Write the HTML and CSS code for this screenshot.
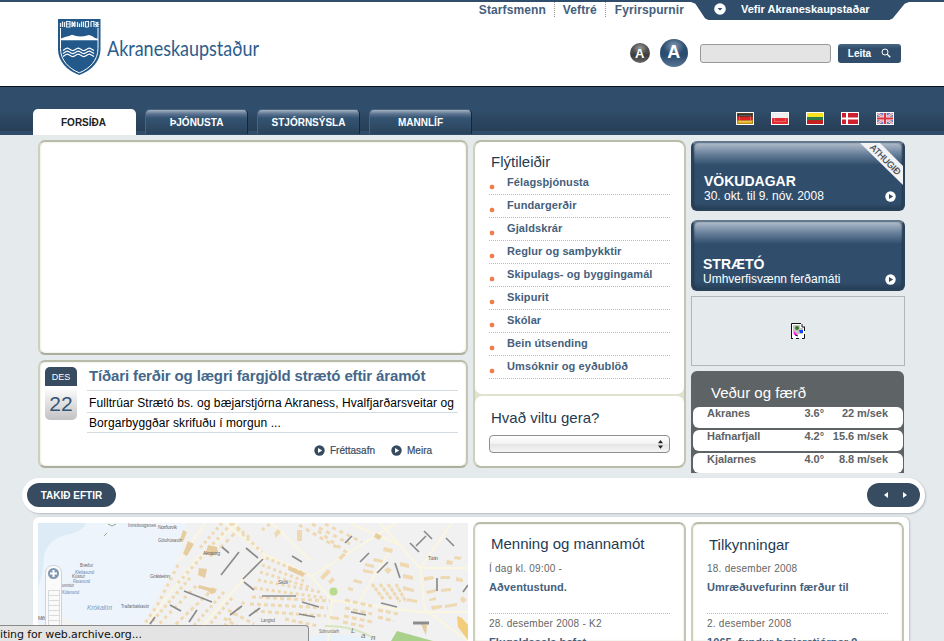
FILE: index.html
```html
<!DOCTYPE html>
<html lang="is">
<head>
<meta charset="utf-8">
<title>Akraneskaupstaður</title>
<link rel="stylesheet" href="styles.css">
</head>
<body>
<svg class="defs" width="0" height="0">
  <defs>
    <symbol id="go" viewBox="0 0 11 11"><circle cx="5.5" cy="5.5" r="5.2" fill="currentColor"/><path d="M4 2.9v5.2l4.2-2.6z" class="hole"/></symbol>
  </defs>
</svg>
<header class="top">
  <svg class="logo" viewBox="57 18 205 60" width="205" height="60">
    <path d="M58 19H100.500V49C100.500 61 92 70.500 79.300 75C66.500 70.500 58 61 58 49Z" fill="#23588a"/>
    <path d="M60.500 28V48.500C60.500 60 68.500 68.500 79.300 72.800C90 68.500 98 60 98 48.500V28" fill="none" stroke="#fff" stroke-width="1"/>
    <path d="M61 40.200V38.500L65 37L69 36L72 34.800L76 36L80 36.500L84 36.300L89 35L92 36L95 38L98 38.800V40.200Z" fill="#fff"/>
    <path d="M60.500 23v4M62.500 21.500v5.500M64.500 22v5M66.500 21.500h3.500v5.500h-3.500zM66.500 24h3.500M72 21.500l3 5.500M72 27l3-5.500M72 21.500v5.500M75 21.500v5.500M77.500 22v5M79.500 23.500v3.500M81.500 21.500v5.500M83.500 21.500v5.500M85.500 21.500h3v5.500M85.500 21.500v5.500h3M91 21.500h3v5.500M91 21.500v5.500M95.500 22l3 2.500-3 2.500M98.500 22l-3 2.500 3 2.500" fill="none" stroke="#e8f0f7" stroke-width="1.200"/>
    <g fill="none" stroke="#fff" stroke-width="1.200">
      <path id="w" d="M63 50.500L66 48.500q1.500-.7 3 .3l2.500 1.500q1.500.6 3-.3l2.500-1.500q1.500-.7 3 .3l2.500 1.500q1.500.6 3-.3l2.500-1.500q1.500-.7 3 .3l3 1.700"/>
      <use href="#w" y="3"/><use href="#w" y="6"/>
    </g>
    <text class="logo-text" x="107" y="56" textLength="152" lengthAdjust="spacingAndGlyphs">Akraneskaupstaður</text>
  </svg>
  <div class="tools">
    <div class="toplinks">
      <a>Starfsmenn</a><a>Veftré</a><a>Fyrirspurnir</a>
      <div class="sites">
        <svg viewBox="0 0 12 12" width="12" height="12"><circle cx="6" cy="6" r="5.800" fill="#fff"/><path d="M3.600 5h4.800L6 7.600z" fill="#304e6c"/></svg>
        <span>Vefir Akraneskaupstaðar</span>
      </div>
    </div>
    <div class="search">
      <span class="ball small">A</span><span class="ball big">A</span>
      <span class="field"></span>
      <span class="btn"><span>Leita</span><svg viewBox="0 0 10 10" width="10" height="10"><circle cx="4" cy="4" r="3" fill="none" stroke="#fff"/><path d="M6.300 6.300L9.300 9.300" stroke="#fff" stroke-width="1.300"/></svg></span>
    </div>
  </div>
</header>
<nav class="nav">
  <a class="tab on">FORSÍÐA</a><a class="tab">ÞJÓNUSTA</a><a class="tab">STJÓRNSÝSLA</a><a class="tab">MANNLÍF</a>
  <div class="flags">
    <svg viewBox="0 0 16 11"><path fill="#333" d="M0 0h16v4H0z"/><path fill="#d22" d="M0 3.600h16v4H0z"/><path fill="#e6b422" d="M0 7.400h16V11H0z"/><path d="M.5.500h15v10H.5z" fill="none" stroke="#855c1f" stroke-opacity=".5"/><path d="M2.500 2.500h11v6h-11z" fill="none" stroke="#fff" stroke-opacity=".2"/></svg>
    <svg viewBox="0 0 16 11"><path fill="#eee" d="M0 0h16v6H0z"/><path fill="#e22d33" d="M0 5h16v6H0z"/><path d="M2.500 2.500h11v6h-11z" fill="none" stroke="#fff" stroke-opacity=".25"/></svg>
    <svg viewBox="0 0 16 11"><path fill="#fde21f" d="M0 0h16v4H0z"/><path fill="#2b7d48" d="M0 4h16v3H0z"/><path fill="#c02222" d="M0 7h16v4H0z"/></svg>
    <svg viewBox="0 0 16 11"><path fill="#cf1f2e" d="M0 0h16v11H0z"/><path d="M5 0v11M0 5.500h16" stroke="#fff" stroke-width="2"/></svg>
    <svg viewBox="0 0 16 11"><path fill="#6175b8" d="M0 0h16v11H0z"/><path d="M0 0l16 11M16 0L0 11" stroke="#f2e6ee" stroke-width="2.400"/><path d="M0 0l16 11M16 0L0 11" stroke="#dc5560" stroke-width=".8"/><path d="M8 0v11M0 5.500h16" stroke="#f6dfe3" stroke-width="3.600"/><path d="M8 0v11M0 5.500h16" stroke="#dc3440" stroke-width="2"/></svg>
  </div>
</nav>
<main class="cols">
  <div class="left">
    <section class="panel hero"></section>
    <section class="panel news">
      <div class="date"><span class="mon">DES</span><span class="day">22</span></div>
      <div class="story">
        <h2>Tíðari ferðir og lægri fargjöld strætó eftir áramót</h2>
        <p class="l1">Fulltrúar Strætó bs. og bæjarstjórna Akraness, Hvalfjarðarsveitar og</p>
        <p class="l2">Borgarbyggðar skrifuðu í morgun ...</p>
        <div class="more">
          <a><svg width="11" height="11"><use href="#go"/></svg>Fréttasafn</a>
          <a><svg width="11" height="11"><use href="#go"/></svg>Meira</a>
        </div>
      </div>
    </section>
  </div>
  <section class="quick">
    <div class="box links">
      <h3>Flýtileiðir</h3>
      <ul>
        <li>Félagsþjónusta</li><li>Fundargerðir</li><li>Gjaldskrár</li><li>Reglur og samþykktir</li><li>Skipulags- og byggingamál</li><li>Skipurit</li><li>Skólar</li><li>Bein útsending</li><li>Umsóknir og eyðublöð</li>
      </ul>
    </div>
    <div class="box want">
      <h3>Hvað viltu gera?</h3>
      <div class="select"><svg viewBox="0 0 5 9" width="5" height="9"><path d="M0 3.300L2.500 0L5 3.300zM0 5.500h5L2.500 8.800z" fill="#222"/></svg></div>
    </div>
  </section>
  <div class="right">
    <a class="banner b1"><svg class="ribbon" viewBox="0 0 48 48" width="48" height="48"><path d="M1 0H21L48 27V46z" fill="#f3f3f6"/><text x="0" y="0" transform="translate(12.500 7) rotate(45)" textLength="39">ATHUGIÐ</text></svg>
      <b>VÖKUDAGAR</b><span>30. okt. til 9. nóv. 2008</span><svg class="go" width="11" height="11"><use href="#go"/></svg></a>
    <a class="banner b2"><b>STRÆTÓ</b><span>Umhverfisvænn ferðamáti</span><svg class="go" width="11" height="11"><use href="#go"/></svg></a>
    <div class="missing">
      <svg viewBox="0 0 14 16" width="14" height="16"><path d="M0 0h10l4 4v12h-4v-1H0z" fill="#fff"/><path d="M.5 15.500V.5H10M11 1v3h3M13.500 4v4M13.500 11v4.500H11M0 15.500h2M5 15.500h3" fill="none" stroke="#111"/><path d="M2 2h7v3h3v6H2z" fill="#c4c4c4"/><circle cx="6" cy="5" r="2" fill="#357a20"/><path d="M3 8l4 4H3z" fill="#f3d"/><path d="M8 7h4v3H9z" fill="#14f"/><path d="M4 12l3 1" stroke="#222"/></svg>
    </div>
    <section class="weather">
      <h3>Veður og færð</h3>
      <div class="row"><span>Akranes</span><span>3.6°</span><span>22 m/sek</span></div>
      <div class="row"><span>Hafnarfjall</span><span>4.2°</span><span>15.6 m/sek</span></div>
      <div class="row last"><span>Kjalarnes</span><span>4.0°</span><span>8.8 m/sek</span></div>
    </section>
  </div>
</main>
<div class="ticker">
  <span class="pill">TAKIÐ EFTIR</span>
  <span class="pill arrows"><svg viewBox="0 0 24 8" width="24" height="8"><path d="M5 1v6L1 4zM20 1v6l4-3z" fill="#fff"/></svg></span>
</div>
<div class="lower">
  <svg class="map" viewBox="38 523 430 118" width="430" height="118">
    <rect x="38" y="523" width="430" height="118" fill="#f1f1f1"/>
    <path d="M38 523H187L182 540L179 560L168 578L160 592L150 612L138 628L125 641H38z" fill="#eef4fb"/>
    <path d="M38 523H86Q83 531 70 534Q48 538 44 556Q43 574 38 587z" fill="#dcebf6"/>
    <path d="M60 614Q75 626 110 630L100 641H60z" fill="#f3f3f3"/>
    <path d="M309 636Q350 632 378 641H309z" fill="#e8f2fa"/>
    <g fill="none" stroke="#fbf6df" stroke-width="2">
      <path d="M238 523L196 560L146 625M205 523L178 562M225 523L265 555L310 575M265 555L225 600L190 641M396 523L312 576M310 575L332 600L328 641M380 523L420 568L425 610L468 641M420 568L452 523M420 568H468M330 600L420 612H468M272 523L310 560M390 550L360 600M350 523L400 545"/>
    </g>
    <g fill="none" stroke="#eed9b2" stroke-width="3">
      <path d="M232 523L178 583" stroke-dasharray="3 3.500"/><path d="M222 523L200 548" stroke-dasharray="3 3"/>
      <path d="M240 528L212 556" stroke-dasharray="4 4"/><path d="M178 565L158 604L142 628" stroke-dasharray="3 4"/>
      <path d="M190 578L150 624" stroke-dasharray="3 3"/><path d="M196 586L158 625" stroke-dasharray="3 4"/>
      <path d="M214 588L174 626" stroke-dasharray="4 3"/><path d="M224 592L188 632" stroke-dasharray="3 3"/>
      <path d="M232 598L200 636" stroke-dasharray="3 3"/><path d="M244 602L216 636" stroke-dasharray="3 4"/>
      <path d="M242 534L262 552M232 523L250 538M262 530L270 524" stroke-dasharray="3 3.500"/>
      <path d="M266 558L306 574M262 565L304 581M260 572L312 588M258 580L320 592M254 588L326 598" stroke-dasharray="3 3"/>
      <path d="M252 597L330 601M250 604L328 608M254 611L326 616M285 619L318 626M228 610L254 624M224 618L246 632" stroke-dasharray="4 3"/>
      <path d="M299 525L338 548M312 524L350 544M325 524L362 542M318 531L350 555" stroke-dasharray="4 4"/>
      <path d="M345 600L372 606M345 608L372 614M344 616L372 622M343 622L366 627M378 610L398 614M378 617L394 621" stroke-dasharray="5 3"/>
      <path d="M372 584L384 600M380 584L392 600M388 584L400 602M396 584L406 602" stroke-dasharray="4 1"/>
    </g>
    <g fill="#eed9b2">
      <path d="M297 530h5v11h-5zM320 577l8-8 3 3-8 8zM328 582l4-5 3 3-4 4zM338 558l5-5 3 2-5 5zM384 547l9 2-1 4-9-2zM374 558l9 2-1 3-9-2zM365 563l9 2v3l-9-2zM363 569l10 2v3l-10-2zM400 562l9 2v4l-9-2zM403 574l10 2v4l-10-2zM403 586l11 3v3l-11-2zM407 598l10 2v3l-10-2zM384 570l4-3 4 3-4 4zM354 579l8 2v3l-9-2zM348 587l5 1v3l-5-1zM424 577l9-1 1 3-10 2zM441 576h9v3h-10zM426 591l10-2v3l-9 2zM441 589l10-1v3l-10 1zM429 599l7-2v3l-6 1zM445 605l12-2v3l-12 2zM431 606l11-1v3l-10 2zM447 560l6 1-1 4-6-1zM455 556l7 1-2 3-6-1zM456 577l7 2v3l-7-1zM462 596l5 4-4 3-3-3zM330 616l9 1v3l-9-1zM274 533l4-4 3 3-5 6z"/>
    </g>
    <g fill="#e6cda0">
      <path d="M208 545l9 2 1 5-7 5-5-5zM199 568l8 1-2 9-7-3zM199 585l12 3 6 1-2 4-4 1-3-3-10-3zM289 566l16 7-2 4-15-7zM183 530l4 2-4 10-3-2zM188 541l6 3-7 12-4-2zM376 533l6 3-3 4-5-3zM421 624l6 1-1 10-3-6z"/>
    </g>
    <path d="M457 616l5 2 6 7v15l-4-5-6-8z" fill="#f3cd7c"/>
    <path d="M397 631L433 641H391z" fill="#a9d18b"/>
    <path d="M325 626Q355 626 375 639" fill="none" stroke="#d5e6bd" stroke-width="2"/>
    <circle cx="333.500" cy="591.500" r="4" fill="#b8db8c"/>
    <g stroke="#8c8c8c" stroke-width="1.700">
      <path d="M221 575L239 552M222 547L229 553M184 591L212 602M243 579L263 559M246 548L258 558M292 556L302 562M360 562L369 553M377 573L388 562M395 563L400 578M410 543L419 552M424 531L432 539M446 538L454 546M416 546L426 536M437 578V591M463 592L468 585M345 543L352 536M244 582L254 590M230 615L242 606M249 616L260 608M189 622L197 610M170 605L181 611M150 624L155 617M262 596H296M302 602L319 607M299 614L315 617M351 612L366 615M381 603L397 607"/>
      <path d="M413 623h16" stroke-width="3"/>
    </g>
    <g class="maplabel">
      <text x="128" y="527" textLength="28" lengthAdjust="spacingAndGlyphs">Innstivogsnes</text><text x="158" y="528.500" textLength="19">Norðurvík</text><text x="158" y="542" textLength="24" lengthAdjust="spacingAndGlyphs">Götuhúsavör</text><text x="150" y="578" textLength="20">Grásteinn</text><text x="80" y="567" textLength="13" lengthAdjust="spacingAndGlyphs">Bræður</text><text x="72" y="578" textLength="13" lengthAdjust="spacingAndGlyphs">Kústur</text><text x="62" y="586.500" textLength="12" lengthAdjust="spacingAndGlyphs">unnstur</text><text x="121" y="608" textLength="28" lengthAdjust="spacingAndGlyphs">Traðarbakkavör</text><text x="38" y="620" textLength="7">Mið</text><text x="261" y="622" textLength="14" lengthAdjust="spacingAndGlyphs">Langisd</text><text x="319" y="633" textLength="20" lengthAdjust="spacingAndGlyphs">Sólmundarh</text><text x="428" y="560" textLength="10">Túnin</text><text x="203" y="555" textLength="17">Akratorg</text><text x="278" y="584" textLength="10">Skóli</text>
      <g class="blue"><text x="75" y="573.500" textLength="19" lengthAdjust="spacingAndGlyphs">Klettasund</text><text x="73" y="582.500" textLength="17" lengthAdjust="spacingAndGlyphs">Flasarsund</text><text x="62" y="594" textLength="17" lengthAdjust="spacingAndGlyphs">Kútarsund</text><text class="bay" x="87" y="610" textLength="25">Krókalón</text></g>
      <text class="bay2" x="351" y="633">L</text><text class="bay2" x="361" y="638">a</text><text class="bay2" x="371" y="640">n</text>
    </g>
    <path d="M108 524l4 2 4-2M107 533l-3 3" stroke="#9aa78a" fill="none"/>
    <rect x="45.500" y="565.500" width="16" height="90" rx="7" fill="#fafafa" stroke="#cfd3d6"/>
    <circle cx="53.500" cy="573.500" r="5.500" fill="#8298b0"/><path d="M53.500 570v7M50 573.500h7" stroke="#fff" stroke-width="2"/>
    <path d="M48.500 590v50M59.500 590v50M48.500 590.500h11M48.500 595.500h11M48.500 600.500h11M48.500 605.500h11M48.500 610.500h11M48.500 615.500h11M48.500 620.500h11" stroke="#d9dcdf" fill="none"/>
  </svg>
  <section class="panel feed f1">
    <h3>Menning og mannamót</h3>
    <article><time>Í dag kl. 09:00 -</time><b>Aðventustund.</b></article>
    <article><time>28. desember 2008 - K2</time><b>Flugeldasala hefst</b></article>
  </section>
  <section class="panel feed f2">
    <h3>Tilkynningar</h3>
    <article><time>18. desember 2008</time><b>Umræðuvefurinn færður til</b></article>
    <article><time>2. desember 2008</time><b>1065. fundur bæjarstjórnar 9</b></article>
  </section>
</div>
<div class="status">iting for web.archive.org...</div>
</body>
</html>
```
FILE: styles.css
```css
* { box-sizing: border-box; }
html { height: 641px; overflow: hidden; }
body { margin: 0; width: 944px; height: 641px; overflow: hidden; background: #e5eaed; font-family: "Liberation Sans", Arial, sans-serif; color: #44607c; }
h2, h3, p, ul { margin: 0; padding: 0; font-weight: normal; }
.defs { position: absolute; }
.hole { fill: var(--hole, #fff); }

.top { height: 86px; background: #fff; border-top: 2px solid #304e6c; display: flex; justify-content: space-between; padding: 16px 35px 0 57px; }
.logo-text { font: 22px Lato, "Open Sans", sans-serif; fill: #2b5d8c; }
.tools { margin-top: -16px; display: flex; flex-direction: column; }
.toplinks { display: flex; font-weight: bold; font-size: 12px; line-height: 17px; color: #44607c; letter-spacing: .1px; height: 20px; }
.toplinks a { height: 15px; padding: 0 8px; border-left: 1px dotted #999; }
.toplinks a:nth-child(3) { padding-left: 9px; padding-right: 7px; }
.toplinks a:first-child { border: 0; }
.sites { width: 218px; height: 18px; background: #304e6c; clip-path: polygon(0 0, 100% 0, 98% 10%, 92.500% 92%, 91% 100%, 8% 100%, 6.500% 92%, 2% 10%); display: flex; align-items: flex-start; gap: 15px; padding: 1px 0 0 23px; color: #fff; font-size: 11px; letter-spacing: 0; line-height: 13px; }
.search { display: flex; align-items: center; height: 28px; margin: 17px 0 0 159px; }
.ball { border-radius: 50%; color: #fff; font-weight: bold; display: flex; align-items: center; justify-content: center; }
.small { width: 20px; height: 20px; font-size: 13px; background: radial-gradient(ellipse 8px 6px at 50% 25%, #999, transparent), linear-gradient(#4c4c4c 50%, #3a3838 60%, #6a6868); }
.big { width: 28px; height: 28px; font-size: 18px; margin-left: 10px; padding-bottom: 1px; background: radial-gradient(ellipse 11px 9px at 50% 25%, #8297b0, transparent), linear-gradient(#2c4d70 60%, #5b7694); }
.field { width: 131px; height: 19px; margin-left: 12px; border: 1px solid #999; border-radius: 3px; background: #e4e4e4; }
.btn { width: 63px; height: 19px; margin-left: 7px; padding: 0 10px; border-radius: 3px; background: linear-gradient(#4a6683, #304e6c 25%); color: #fff; font: bold 10px/19px "Liberation Sans", sans-serif; display: flex; justify-content: space-between; align-items: center; }

.nav { height: 49px; border-top: 1px solid #0a1118; background: linear-gradient(#304e6c 45%, #273e56 92%, #2f4d6b 92%); display: flex; align-items: flex-end; gap: 9px; padding-left: 33px; }
.tab { width: 103px; height: 25px; border-radius: 5px 5px 0 0; background: linear-gradient(#a5b2c2, #5a7390 4px, #345472 8px, #2a425b); border: solid #47637f; border-width: 1px 1px 0; border-right: 1px solid #142638; margin-bottom: 1px; color: #fff; font: bold 10px/25px "Liberation Sans", sans-serif; text-align: center; letter-spacing: 0; }
.tab.on { height: 26px; margin: 0; padding-right: 2px; background: #fff; border: 0; color: #222; line-height: 28px; }
.flags { display: flex; gap: 17px; margin: 0 0 10px 255px; }
.flags svg { width: 18px; height: 13px; border: 1px solid #fff; }

.cols { display: grid; grid-template-columns: 430px 213px 214px; gap: 5px; padding: 5px 0 0 38px; height: 343px; }
.panel { background: #fff; border: 2px solid; border-color: #b9bca8 #c3c6b3 #abae9d #cdd0bc; border-radius: 7px; box-shadow: inset 0 0 2px #d4d7c5; }
.hero { height: 215px; }
.news { height: 108px; margin-top: 5px; padding: 5px 7px 0 5px; display: flex; gap: 10px; }
.date { width: 32px; text-align: center; display: flex; flex-direction: column; gap: 3px; }
.mon { height: 19px; border-radius: 5px 5px 0 0; background: #374b61; color: #fff; font-size: 9px; line-height: 20px; }
.day { height: 31px; border-radius: 0 0 5px 5px; background: linear-gradient(#fbfbfb, #c2c2c4); color: #355577; font-size: 21px; line-height: 29px; }
.story { width: 371px; }
.story h2 { height: 24px; padding-left: 2px; border-bottom: 1px solid #d3dbe2; font-weight: bold; font-size: 15px; line-height: 18px; letter-spacing: -.14px; color: #44678a; white-space: nowrap; }
.story p { padding-left: 2px; border-bottom: 1px solid #d3dbe2; font-size: 12px; letter-spacing: .09px; color: #000; white-space: nowrap; }
.l1 { height: 22px; line-height: 24px; }
.l2 { height: 20px; line-height: 20px; }
.more { display: flex; gap: 16px; margin: 12px 0 0 227px; font-size: 10px; line-height: 12px; -webkit-text-stroke: .2px; color: #374b61; }
.more a { display: flex; gap: 5px; align-items: center; }
.more svg { color: #374b61; margin-top: -1px; }

.quick { height: 328px; background: #dfe2cf; border: 2px solid; border-color: #b9bca8 #c3c6b3 #b9bca8 #cdd0bc; border-radius: 8px; display: flex; flex-direction: column; gap: 2px; }
.box { background: #fff; border-radius: 7px; }
.links { height: 252px; padding: 10px 14px 0; }
h3 { font-size: 15px; line-height: 20px; color: #1f3b52; padding-left: 2px; }
ul { list-style: none; }
li { height: 23px; padding-left: 18px; border-bottom: 1px dotted #bbb; font: bold 11px/20px "Liberation Sans", sans-serif; background: radial-gradient(circle at 3px 15px, #f47c4c 2px, transparent 2.700px); color: #44607c; letter-spacing: .1px; }
.want { flex: 1; padding: 12px 14px 0; }
.select { width: 181px; height: 18px; margin-top: 7px; border: 1px solid #8e8e8e; border-radius: 4px; background: linear-gradient(#fff, #f2f2f2 50%, #e5e5e5 50%, #f5f5f5); display: flex; align-items: center; justify-content: flex-end; padding-right: 6px; }

.right { display: flex; flex-direction: column; }
.banner { position: relative; height: 70px; margin-top: 1px; padding: 31px 0 0 10px; border-radius: 6px; background: linear-gradient(#b0bccb, #627b96 12px, #304e6c 22px, #304e6c 60px, #283f58); border: 2px solid; border-color: #64788d #2b4158 #2b4158; box-shadow: inset 2px 0 2px -1px #23384e, inset -2px 0 2px -1px #23384e; color: #fff; display: flex; flex-direction: column; overflow: hidden; }
.banner b { font-size: 14px; line-height: 15px; }
.banner span { font-size: 12px; line-height: 15px; }
.b1 { padding-left: 11px; }
.b2 { height: 71px; margin-top: 9px; padding-top: 35px; }
.ribbon { position: absolute; right: -2px; top: -2px; }
.ribbon text { font: 9px "Liberation Sans", sans-serif; fill: #333f4c; stroke: #333f4c; stroke-width: .2px; }
.go { position: absolute; right: 7px; bottom: 7px; color: #fff; --hole: #304e6c; }
.b2 .go { bottom: 4px; }
.missing { height: 70px; margin-top: 5px; border: 1px solid #b3b5b6; display: flex; align-items: center; justify-content: center; }
.weather { height: 102px; margin-top: 5px; width: 213px; background: #5e6365; border-radius: 6px 6px 0 0; padding: 12px 1px 0 2px; overflow: hidden; }
.weather h3 { color: #fff; padding-left: 18px; height: 24px; }
.row { height: 21px; margin-bottom: 2px; border-radius: 6px; background: #fff; display: grid; grid-template-columns: 70px 47px 64px; font: bold 11px/13px "Liberation Sans", sans-serif; letter-spacing: -.05px; color: #5e6365; padding-left: 14px; white-space: nowrap; }
.row span + span { text-align: right; justify-self: end; }
.row.last { height: 20px; margin: 0; }

.ticker { height: 35px; width: 903px; margin-left: 22px; border-radius: 18px; background: #fff; box-shadow: 1px 1px 2px #b4bbc3; display: flex; justify-content: space-between; padding: 5px; }
.pill { width: 89px; height: 24px; border-radius: 12px; background: #374b61; color: #fff; font: bold 10px/25px "Liberation Sans", sans-serif; text-align: center; }
.arrows { width: 53px; display: flex; align-items: center; justify-content: center; padding-left: 2px; }
.lower { width: 876px; height: 124px; margin: 4px 0 0 33px; background: #fff; border-radius: 6px 6px 0 0; box-shadow: 1px 0 2px #b9c0c8; display: flex; gap: 5px; padding: 5px 0 0 5px; }
.map { margin-top: 1px; }
.maplabel text { font: 5px "Liberation Sans", sans-serif; fill: #666; }
.maplabel .blue text { fill: #5a83b8; font-style: italic; }
.maplabel .blue .bay { font-size: 6.500px; fill: #7e9cc4; }
.maplabel .bay2 { font: italic 8px "Liberation Sans", sans-serif; fill: #777; }
.feed { width: 213px; height: 119px; padding: 10px 14px 0; border-bottom: 0; border-radius: 7px 7px 0 0; overflow: hidden; }
.feed h3 { height: 25px; }
.f2 h3 { line-height: 22px; }
article { height: 55px; padding-top: 1px; border-bottom: 1px dotted #bbb; display: flex; flex-direction: column; }
article:last-child { border: 0; }
time { font-size: 10px; line-height: 17px; letter-spacing: .25px; color: #666; }
article b { font-size: 11px; line-height: 21px; letter-spacing: .07px; white-space: nowrap; color: #44607c; }
.status { position: absolute; left: 0; top: 625px; width: 309px; height: 16px; overflow: hidden; background: #e4e4e4; border: solid #8b8b8b; border-width: 1px 1px 0 0; border-radius: 0 4px 0 0; font: 11px/17px "DejaVu Sans", sans-serif; letter-spacing: -.12px; color: #111; white-space: nowrap; }
```
